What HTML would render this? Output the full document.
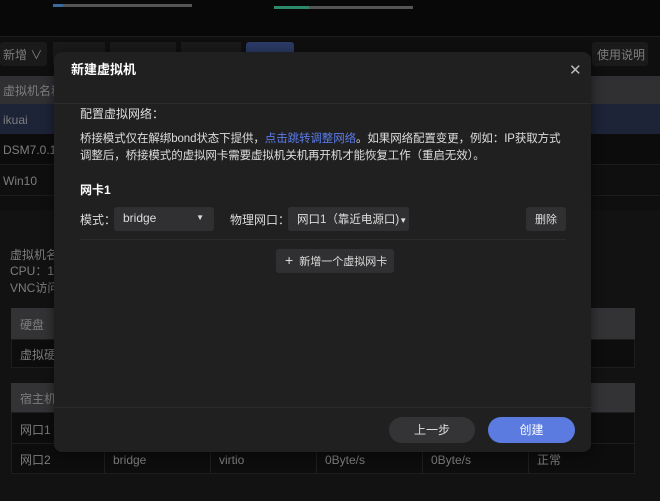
<!DOCTYPE html>
<html><head><meta charset="utf-8"><style>
*{margin:0;padding:0;box-sizing:border-box}
body{width:660px;height:501px;background:#0f0f10;font-family:"Liberation Sans","Noto Sans CJK SC",sans-serif;position:relative;overflow:hidden;color:#8a8a8a;font-size:12px}
.a{position:absolute}
.cell{position:absolute;font-size:12px;color:#7d7d7d}
</style></head><body>
<div class="a" style="left:0;top:0;width:660px;height:37px;background:#080808;border-bottom:1px solid #1e1e1e"></div>
<div class="a" style="left:53px;top:4px;width:139px;height:3px;background:#555"></div>
<div class="a" style="left:53px;top:4px;width:10px;height:3px;background:#3a6a9a"></div>
<div class="a" style="left:274px;top:6px;width:139px;height:3px;background:#555"></div>
<div class="a" style="left:274px;top:6px;width:35px;height:3px;background:#2a8a6a"></div>
<div class="a" style="left:0;top:42px;width:47px;height:24px;background:#1a1a1a;border-radius:3px"></div>
<div class="cell" style="left:3px;top:46px">新增 ∨</div>
<div class="a" style="left:53px;top:42px;width:52px;height:24px;background:#1a1a1a"></div>
<div class="a" style="left:110px;top:42px;width:66px;height:24px;background:#1a1a1a"></div>
<div class="a" style="left:181px;top:42px;width:60px;height:24px;background:#1a1a1a"></div>
<div class="a" style="left:246px;top:42px;width:48px;height:24px;background:#2a3a66;border-radius:3px"></div>
<div class="a" style="left:592px;top:42px;width:56px;height:24px;background:#1a1a1a;border-radius:3px"></div>
<div class="cell" style="left:597px;top:46px">使用说明</div>
<div class="a" style="left:0;top:76px;width:660px;height:28px;background:#303033"></div>
<div class="cell" style="left:3px;top:82px">虚拟机名称</div>
<div class="a" style="left:0;top:104px;width:660px;height:30px;background:#1d2438"></div>
<div class="cell" style="left:3px;top:113px">ikuai</div>
<div class="a" style="left:0;top:134px;width:660px;height:31px;background:#0c0c0c;border-bottom:1px solid #1c1c1c"></div>
<div class="cell" style="left:3px;top:143px">DSM7.0.1</div>
<div class="cell" style="left:3px;top:174px">Win10</div>
<div class="a" style="left:0;top:195px;width:660px;height:1px;background:#1c1c1c"></div>
<div class="a" style="left:0;top:210px;width:660px;height:291px;background:#121212"></div>
<div class="cell" style="left:10px;top:246px">虚拟机名</div>
<div class="cell" style="left:10px;top:262px">CPU：1</div>
<div class="cell" style="left:10px;top:279px">VNC访问</div>
<div class="a" style="left:11px;top:308px;width:624px;height:31px;background:#333336"></div>
<div class="cell" style="left:20px;top:316px">硬盘</div>
<div class="a" style="left:11px;top:339px;width:624px;height:29px;background:#0d0d0d;border:1px solid #1e1e1e"></div>
<div class="cell" style="left:20px;top:346px">虚拟硬</div>
<div class="a" style="left:11px;top:383px;width:624px;height:29px;background:#333336"></div>
<div class="cell" style="left:20px;top:390px">宿主机</div>
<div class="a" style="left:11px;top:412px;width:624px;height:62px;background:#0d0d0d;border:1px solid #1e1e1e"></div>
<div class="a" style="left:11px;top:443px;width:624px;height:1px;background:#1e1e1e"></div>
<div class="a" style="left:104px;top:443px;width:1px;height:31px;background:#1e1e1e"></div>
<div class="a" style="left:210px;top:443px;width:1px;height:31px;background:#1e1e1e"></div>
<div class="a" style="left:316px;top:443px;width:1px;height:31px;background:#1e1e1e"></div>
<div class="a" style="left:422px;top:443px;width:1px;height:31px;background:#1e1e1e"></div>
<div class="a" style="left:528px;top:443px;width:1px;height:31px;background:#1e1e1e"></div>
<div class="cell" style="left:20px;top:421px">网口1</div>
<div class="cell" style="left:20px;top:451px">网口2</div>
<div class="cell" style="left:113px;top:453px">bridge</div>
<div class="cell" style="left:219px;top:453px">virtio</div>
<div class="cell" style="left:325px;top:453px">0Byte/s</div>
<div class="cell" style="left:431px;top:453px">0Byte/s</div>
<div class="cell" style="left:537px;top:451px">正常</div>
<div class="a" style="left:54px;top:52px;width:537px;height:400px;background:#202021;border-radius:8px;box-shadow:0 2px 12px rgba(0,0,0,.5)">
 <div class="a" style="left:17px;top:7px;font-size:13px;font-weight:bold;color:#fff">新建虚拟机</div>
 <div class="a" style="left:515px;top:9px;font-size:15px;color:#bbb">✕</div>
 <div class="a" style="left:0;top:51px;width:537px;height:1px;background:#2c2c2d"></div>
 <div class="a" style="left:26px;top:53px;font-size:12px;color:#ddd">配置虚拟网络：</div>
 <div class="a" style="left:26px;top:79px;width:490px;font-size:11.5px;line-height:17px;color:#ddd;letter-spacing:-0.1px">桥接模式仅在解绑bond状态下提供，<span style="color:#5a7be8">点击跳转调整网络</span>。如果网络配置变更，例如：IP获取方式调整后，桥接模式的虚拟网卡需要虚拟机关机再开机才能恢复工作（重启无效）。</div>
 <div class="a" style="left:26px;top:129px;font-size:12px;font-weight:bold;color:#fff">网卡1</div>
 <div class="a" style="left:26px;top:159px;color:#ddd">模式：</div>
 <div class="a" style="left:60px;top:155px;width:100px;height:24px;background:#303032;border-radius:3px;color:#ddd;padding:4px 0 0 9px">bridge<span style="position:absolute;right:10px;top:6px;font-size:8px">▼</span></div>
 <div class="a" style="left:176px;top:159px;color:#ddd">物理网口：</div>
 <div class="a" style="left:234px;top:155px;width:121px;height:24px;background:#303032;border-radius:3px;color:#ddd;padding:4px 0 0 9px;font-size:11.5px">网口1（靠近电源口)<span style="font-size:8px">▼</span></div>
 <div class="a" style="left:472px;top:155px;width:40px;height:24px;background:#303032;border-radius:3px;color:#ddd;padding:4px 0 0 9px;font-size:11px">删除</div>
 <div class="a" style="left:26px;top:187px;width:486px;height:1px;background:#2b2b2c"></div>
 <div class="a" style="left:222px;top:197px;width:118px;height:24px;background:#303032;border-radius:3px;color:#ddd;padding:4px 0 0 9px;font-size:11px"><span style="font-size:14px;line-height:12px">+</span>&nbsp; 新增一个虚拟网卡</div>
 <div class="a" style="left:0;top:355px;width:537px;height:1px;background:#2a2a2b"></div>
 <div class="a" style="left:335px;top:365px;width:86px;height:26px;background:#343436;border-radius:13px;color:#ddd;text-align:center;line-height:26px">上一步</div>
 <div class="a" style="left:434px;top:365px;width:87px;height:26px;background:#5b7be0;border-radius:13px;color:#fff;text-align:center;line-height:26px">创建</div>
</div>
</body></html>
